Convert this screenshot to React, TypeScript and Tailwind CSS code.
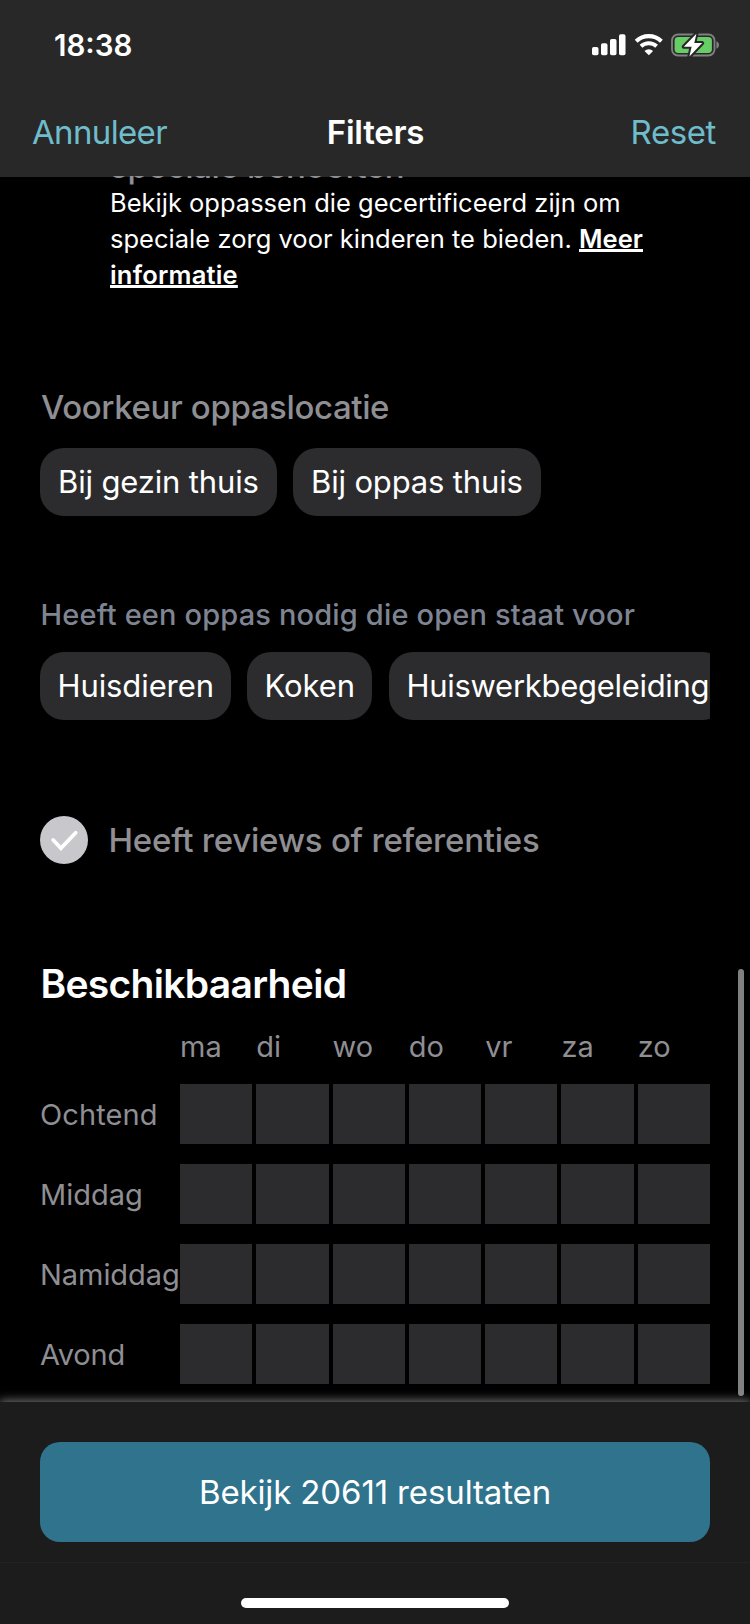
const days = ['ma', 'di', 'wo', 'do', 'vr', 'za', 'zo'];
const dayParts = [
  { label: 'Ochtend', tracking: 'tracking-[0.1px]' },
  { label: 'Middag', tracking: 'tracking-[0px]' },
  { label: 'Namiddag', tracking: 'tracking-[-0.05px]' },
  { label: 'Avond', tracking: 'tracking-[-0.2px]' },
];

function SignalIcon() {
  return (
    <svg width="34" height="22" viewBox="0 0 34 22" fill="#fff" className="shrink-0">
      <rect x="0" y="13" width="6.5" height="8.2" rx="1.8" />
      <rect x="9" y="9.2" width="6.5" height="12" rx="1.8" />
      <rect x="18" y="5" width="6.5" height="16.2" rx="1.8" />
      <rect x="27" y="0.2" width="6.5" height="21" rx="1.8" />
    </svg>
  );
}

function WifiIcon() {
  return (
    <svg width="30" height="22" viewBox="0 0 30 22" fill="none" className="shrink-0">
      <path d="M2.2 7.2a18.4 18.4 0 0 1 25.2 0" stroke="#fff" strokeWidth="4.2" />
      <path d="M7 12.2a11.6 11.6 0 0 1 15.6 0" stroke="#fff" strokeWidth="4" />
      <path d="M14.8 21.2l-4.3-4.3a6.3 6.3 0 0 1 8.6 0z" fill="#fff" />
    </svg>
  );
}

function BatteryIcon() {
  return (
    <svg width="50" height="26" viewBox="0 0 50 26" fill="none" className="shrink-0">
      <rect x="1" y="2.5" width="42.5" height="21" rx="6" stroke="#808080" strokeWidth="1.8" />
      <path d="M45.4 9.3c1.6.5 2.6 2 2.6 3.7s-1 3.2-2.6 3.7z" fill="#808080" />
      <rect x="3.6" y="5.1" width="37.3" height="15.8" rx="3.6" fill="#67ce67" />
      <path
        d="M25.4 1.7L12.800 14.700h7.800l-2.200 9.800L31.200 11.100h-7.900z"
        fill="#fff"
        stroke="#282828"
        strokeWidth="4"
        strokeLinejoin="round"
      />
      <path d="M25.4 1.7L12.800 14.700h7.800l-2.200 9.800L31.200 11.100h-7.900z" fill="#fff" />
    </svg>
  );
}

export default function App() {
  return (
    <div className="flex h-[1624px] w-[750px] flex-col overflow-hidden bg-black font-['Inter','Liberation_Sans',sans-serif] text-white">
      <header className="h-[177px] shrink-0 bg-[#282828]">
        <div className="flex h-[90px] items-center justify-between pr-[29px] pl-[54px]">
          <span className="text-[29.5px] leading-[40px] font-semibold">18:38</span>
          <div className="flex items-center">
            <SignalIcon />
            <div className="w-[8px]" />
            <WifiIcon />
            <div className="w-[7px]" />
            <BatteryIcon />
          </div>
        </div>
        <div className="grid h-[84px] grid-cols-3 items-center pr-[34px] pl-[32px] text-[33px] leading-[40px]">
          <button className="text-left tracking-[-0.65px] text-[#6fbccb]">Annuleer</button>
          <h1 className="pl-[3px] text-center font-semibold tracking-[-0.25px]">Filters</h1>
          <button className="text-right tracking-[-0.4px] text-[#6fbccb]">Reset</button>
        </div>
      </header>

      <main className="relative -mt-px flex h-[1226px] shrink-0 flex-col overflow-hidden px-[40px]">
        <section className="-mt-[30px] pl-[70px]">
          <h2 className="text-[33px] leading-[40px] font-medium tracking-[-0.35px] whitespace-nowrap text-[#8e8e93]">
            speciale behoeften
          </h2>
          <p className="-mt-px text-[25.5px] leading-[36px] whitespace-nowrap">
            Bekijk oppassen die gecertificeerd zijn om
            <br />
            <span className="tracking-[0.02px]">speciale zorg voor kinderen te bieden.</span>{' '}
            <a className="font-semibold tracking-[0.05px] underline decoration-[3px] underline-offset-[1px] [text-decoration-skip-ink:none]">
              Meer
            </a>
            <br />
            <a className="font-semibold tracking-[0.2px] underline decoration-[3px] underline-offset-[1px] [text-decoration-skip-ink:none]">
              informatie
            </a>
          </p>
        </section>

        <section className="mt-[94px]">
          <h2 className="pl-px text-[33px] leading-[40px] font-medium tracking-[-0.38px] text-[#8e8e93]">Voorkeur oppaslocatie</h2>
          <div className="mt-[21px] flex gap-[16px] text-[31px] tracking-[-0.15px] whitespace-nowrap">
            <button className="h-[68px] w-[237px] rounded-[24px] bg-[#2c2c2e] pl-[18px] text-left">Bij gezin thuis</button>
            <button className="h-[68px] w-[248px] rounded-[24px] bg-[#2c2c2e] pl-[18px] text-left">Bij oppas thuis</button>
          </div>
        </section>

        <section className="mt-[79px]">
          <h2 className="pl-[0.5px] text-[29px] leading-[40px] font-medium tracking-[0.16px] whitespace-nowrap text-[#7f8492]">
            Heeft een oppas nodig die open staat voor
          </h2>
          <div className="mt-[17px] flex overflow-hidden text-[31px] whitespace-nowrap">
            <button className="mr-[16px] h-[68px] w-[191px] shrink-0 rounded-[24px] bg-[#2c2c2e] pl-[17.5px] text-left tracking-[-0.1px]">Huisdieren</button>
            <button className="mr-[17px] h-[68px] w-[125px] shrink-0 rounded-[24px] bg-[#2c2c2e] pl-[17.5px] text-left tracking-[-0.1px]">Koken</button>
            <button className="h-[68px] w-[337px] shrink-0 rounded-[24px] bg-[#2c2c2e] pl-[17.5px] text-left tracking-[-0.29px]">Huiswerkbegeleiding</button>
          </div>
        </section>

        <label className="mt-[96px] flex h-[48px] shrink-0 items-center">
          <svg width="48" height="48" viewBox="0 0 48 48" fill="none" className="shrink-0">
            <circle cx="24" cy="24" r="24" fill="#c7c7cc" />
            <path d="M13.2 24l7.700 8.200L35.700 16.800" stroke="#fff" strokeWidth="3.800" strokeLinecap="round" />
          </svg>
          <span className="pl-[20.5px] text-[33px] leading-[40px] font-medium tracking-[-0.23px] text-[#8e8e93]">Heeft reviews of referenties</span>
        </label>

        <section className="mt-[96px]">
          <h2 className="pl-[0.5px] text-[39px] leading-[48px] font-semibold tracking-[-0.7px]">Beschikbaarheid</h2>
          <div className="mt-[20px] grid h-[37px] grid-cols-7 items-center gap-[4px] pl-[140px] text-[29px] leading-[37px] text-[#8e8e93]">
            {days.map((day) => (
              <span key={day}>{day}</span>
            ))}
          </div>
          <div className="mt-[19px] flex flex-col gap-[20px]">
            {dayParts.map(({ label, tracking }) => (
              <div key={label} className="flex h-[60px]">
                <span className={`w-[140px] shrink-0 pt-px text-[29px] leading-[60px] whitespace-nowrap text-[#8e8e93] ${tracking}`}>{label}</span>
                <div className="grid flex-1 grid-cols-7 gap-[4px]">
                  {days.map((day) => (
                    <div key={day} className="bg-[#2c2c2e]" />
                  ))}
                </div>
              </div>
            ))}
          </div>
        </section>
        <div className="absolute top-[793px] right-[6px] h-[427px] w-[6px] rounded-full bg-[#808080]" />
      </main>

      <footer className="relative flex flex-1 flex-col bg-[#1c1c1c] shadow-[0_0_10px_1px_rgba(255,255,255,0.5)]">
        <div className="h-[161px] border-b border-[#222326] px-[40px] pt-[40px]">
          <button className="h-[100px] w-full rounded-[20px] bg-[#30738d] text-[33px] leading-[40px] tracking-[-0.13px]">
            Bekijk 20611 resultaten
          </button>
        </div>
        <div className="mx-auto mt-[35px] h-[10px] w-[268px] rounded-full bg-white" />
      </footer>
    </div>
  );
}
